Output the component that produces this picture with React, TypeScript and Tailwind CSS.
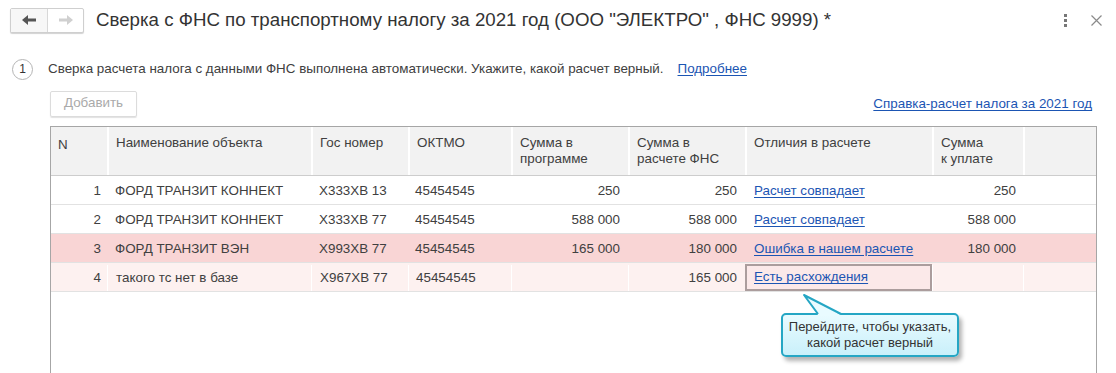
import React from "react";

const font = { fontFamily: '"Liberation Sans", Arial, sans-serif' };

type Row = {
  n: number;
  name: string;
  gos: string;
  oktmo: string;
  prog: string;
  fns: string;
  diff: string;
  pay: string;
  tone: "plain" | "error" | "warn";
};

const rows: Row[] = [
  { n: 1, name: "ФОРД ТРАНЗИТ КОННЕКТ", gos: "Х333ХВ 13", oktmo: "45454545", prog: "250", fns: "250", diff: "Расчет совпадает", pay: "250", tone: "plain" },
  { n: 2, name: "ФОРД ТРАНЗИТ КОННЕКТ", gos: "Х333ХВ 77", oktmo: "45454545", prog: "588 000", fns: "588 000", diff: "Расчет совпадает", pay: "588 000", tone: "plain" },
  { n: 3, name: "ФОРД ТРАНЗИТ ВЭН", gos: "Х993ХВ 77", oktmo: "45454545", prog: "165 000", fns: "180 000", diff: "Ошибка в нашем расчете", pay: "180 000", tone: "error" },
  { n: 4, name: "такого тс нет в базе", gos: "Х967ХВ 77", oktmo: "45454545", prog: "", fns: "165 000", diff: "Есть расхождения", pay: "", tone: "warn" },
];

const cols = "grid grid-cols-[56px_204px_97px_103px_117px_117px_187px_91px_1fr]";

function NavArrow({ dir, color }: { dir: "left" | "right"; color: string }) {
  return (
    <svg width="14" height="10" viewBox="0 0 14 10">
      {dir === "left" ? (
        <>
          <polygon points="0,5 6,0 6,10" fill={color} />
          <rect x="5" y="3.5" width="9" height="3" fill={color} />
        </>
      ) : (
        <>
          <polygon points="14,5 8,0 8,10" fill={color} />
          <rect x="0" y="3.5" width="9" height="3" fill={color} />
        </>
      )}
    </svg>
  );
}

function Header() {
  return (
    <div className="flex items-center h-[40px] pl-[10px] pr-[14px]">
      <div className="flex h-[25px] border border-[#cfcfcf] rounded-[2px] shadow-[0_1px_1px_rgba(0,0,0,0.18)] bg-white">
        <div className="w-[37px] flex items-center justify-center border-r border-[#d8d8d8] bg-[#f7f7f7]">
          <NavArrow dir="left" color="#555" />
        </div>
        <div className="w-[35px] flex items-center justify-center">
          <NavArrow dir="right" color="#d0d0d0" />
        </div>
      </div>
      <h1 className="ml-[12px] text-[18.7px] text-[#333] leading-none whitespace-nowrap">
        Сверка с ФНС по транспортному налогу за 2021 год (ООО "ЭЛЕКТРО" , ФНС 9999) *
      </h1>
      <div className="ml-auto flex items-center gap-[24px] pt-[1px]">
        <div className="flex flex-col gap-[2px]">
          <span className="w-[3px] h-[3px] bg-[#777]" />
          <span className="w-[3px] h-[3px] bg-[#777]" />
          <span className="w-[3px] h-[3px] bg-[#777]" />
        </div>
        <svg width="11" height="11" viewBox="0 0 11 11">
          <path d="M0.5 0.5 L10.5 10.5 M10.5 0.5 L0.5 10.5" stroke="#8a8a8a" strokeWidth="1.2" />
        </svg>
      </div>
    </div>
  );
}

function DiffLink({ text }: { text: string }) {
  return <span className="text-[#1b55b3] underline underline-offset-2">{text}</span>;
}

export default function App() {
  return (
    <div style={font} className="w-[1116px] h-[373px] overflow-hidden bg-white text-[13.4px] text-[#404040]">
      <Header />

      <div className="flex items-center h-[22px] mt-[18px] pl-[12px]">
        <div className="w-[21px] h-[21px] rounded-full border border-[#b5b5b5] flex items-center justify-center text-[12px] text-[#333]">
          1
        </div>
        <span className="ml-[15px] text-[#404040]">
          Сверка расчета налога с данными ФНС выполнена автоматически. Укажите, какой расчет верный.
        </span>
        <span className="ml-[14px] text-[#1b55b3] underline underline-offset-2">Подробнее</span>
      </div>

      <div className="flex items-center justify-between pl-[50px] pr-[24px] mt-[10px] h-[27px]">
        <div className="h-[26px] w-[87px] flex items-center justify-center border border-[#dcdcdc] rounded-[2px] shadow-[0_1px_1px_rgba(0,0,0,0.12)] text-[#aaa]">
          Добавить
        </div>
        <span className="text-[#1b55b3] underline underline-offset-2 mt-[2px]">Справка-расчет налога за 2021 год</span>
      </div>

      <div className="relative ml-[50px] mt-[9px] w-[1047px] h-[260px] border-l border-t border-r border-[#a6a6a6]">
        <div className={`${cols} h-[49px] bg-[#f2f2f2] border-b border-[#cdcdcd]`}>
          <div className="pl-[7px] pt-[8px]">N</div>
          {[
            "Наименование объекта",
            "Гос номер",
            "ОКТМО",
            "Сумма в\nпрограмме",
            "Сумма в\nрасчете ФНС",
            "Отличия в расчете",
            "Сумма\nк уплате",
            "",
          ].map((h, i) => (
            <div key={i} className="border-l-2 border-white pl-[7px] pt-[8px] leading-[16px] whitespace-pre-line">
              {h}
            </div>
          ))}
        </div>

        {rows.map((r) => {
          const bg =
            r.tone === "error" ? "bg-[#f9d5d5]" : r.tone === "warn" ? "bg-[#fdf1f0]" : "bg-white";
          const sep = r.tone === "warn" ? "border-l border-white" : "";
          return (
            <div key={r.n} className={`${cols} h-[29px] pt-[2px] items-stretch border-b border-[#e2e2e2] ${bg}`}>
              <div className="flex items-center justify-end pr-[6px]">{r.n}</div>
              <div className={`flex items-center pl-[8px] ${sep}`}>{r.name}</div>
              <div className={`flex items-center pl-[8px] ${sep}`}>{r.gos}</div>
              <div className={`flex items-center pl-[7px] ${sep}`}>{r.oktmo}</div>
              <div className={`flex items-center justify-end pr-[8px] ${sep}`}>{r.prog}</div>
              <div className={`flex items-center justify-end pr-[8px] ${sep}`}>{r.fns}</div>
              {r.tone === "warn" ? (
                <div className="flex items-center pl-[7px] border-2 border-[#ab9d9d] bg-[#fbe9e9] -mt-[1px]">
                  <DiffLink text={r.diff} />
                </div>
              ) : (
                <div className={`flex items-center pl-[9px]`}>
                  <DiffLink text={r.diff} />
                </div>
              )}
              <div className={`flex items-center justify-end pr-[7px] ${sep}`}>{r.pay}</div>
              <div className={sep} />
            </div>
          );
        })}

        {/* tooltip */}
        <div className="absolute left-[730px] top-[186px] w-[178px] h-[44px] rounded-[5px] border-2 border-[#25a6c4] bg-gradient-to-b from-[#e9fbff] to-[#c9f0fa] shadow-[3px_4px_4px_rgba(0,0,0,0.3)] flex items-center justify-center text-center text-[13px] leading-[16px] text-[#333]">
          Перейдите, чтобы указать,
          <br />
          какой расчет верный
        </div>
        <svg className="absolute left-[748px] top-[166px]" width="48" height="23" viewBox="0 0 48 23">
          <polygon points="19,22 5,2 42,22" fill="#e9fbff" />
          <polyline points="19,21 5,2 42,21" fill="none" stroke="#25a6c4" strokeWidth="2" strokeLinejoin="round" />
        </svg>
      </div>
    </div>
  );
}
